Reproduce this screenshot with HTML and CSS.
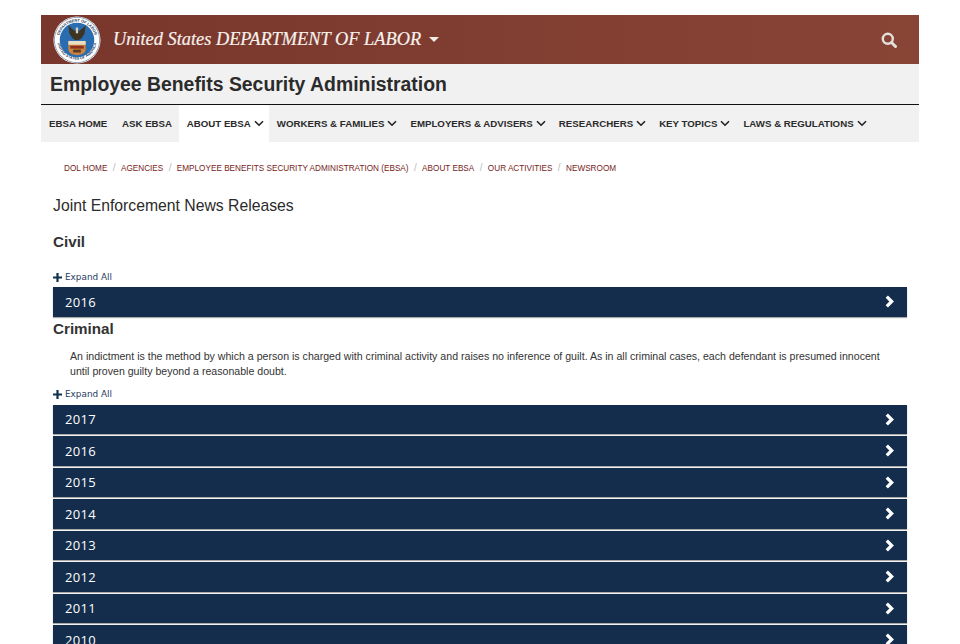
FILE: index.html
```html
<!DOCTYPE html>
<html lang="en">
<head>
    <meta charset="UTF-8">
    <meta name="viewport" content="width=device-width, initial-scale=1.0">
    <title>Joint Enforcement News Releases</title>
    <link rel="stylesheet" href="styles.css">
</head>
<body>
<div class="page">

    <header class="top-bar">
        <svg class="seal" viewBox="0 0 50 50" role="img" aria-label="Department of Labor seal">
            <circle cx="25" cy="25" r="24.5" fill="#fff"/>
            <circle cx="25" cy="25" r="23.6" fill="none" stroke="#2a3f63" stroke-width=".5"/>
            <defs>
                <path id="ring-top" d="M6 25a19 19 0 0 1 38 0"/>
                <path id="ring-bottom" d="M4.500 25a20.500 20.500 0 0 0 41 0"/>
            </defs>
            <text class="seal-text"><textPath href="#ring-top" startOffset="50%" text-anchor="middle">DEPARTMENT OF LABOR</textPath></text>
            <text class="seal-text"><textPath href="#ring-bottom" startOffset="50%" text-anchor="middle">UNITED STATES OF AMERICA</textPath></text>
            <circle cx="25" cy="25" r="18" fill="#2a6cb0"/>
            <path d="M25 13l-2 3-7-6 1 8 3 5 3 2h4l3-2 3-5 1-8-7 6z" fill="#3d3524"/>
            <path d="M23.800 12h2.400v6h-2.400z" fill="#d9d2bd"/>
            <path d="M16 26h18v9q0 5-9 6-9-1-9-6z" fill="#c9853f"/>
            <path d="M16 26h18v4H16z" fill="#eadfc4"/>
            <path d="M18 31h14v3H18z" fill="#8e2f22"/>
            <path d="M21 35h8v3h-8z" fill="#5c3a22"/>
        </svg>
        <a class="agency" href="#">United States DEPARTMENT OF LABOR<span class="caret"></span></a>
        <svg class="search" viewBox="0 0 16 16" aria-label="Search">
            <circle cx="6.800" cy="6.800" r="5" fill="none" stroke="currentColor" stroke-width="2.400"/>
            <path d="M10.500 10.500l4 4" stroke="currentColor" stroke-width="3" stroke-linecap="round"/>
        </svg>
    </header>

    <div class="title-band">Employee Benefits Security Administration</div>

    <nav class="main-nav">
        <a class="nav-link" href="#">EBSA HOME</a>
        <a class="nav-link" href="#">ASK EBSA</a>
        <a class="nav-link has-menu active" href="#">ABOUT EBSA<svg class="chev" viewBox="0 0 10 7"><path d="M1 1.200l4 4 4-4"/></svg></a>
        <a class="nav-link has-menu" href="#">WORKERS &amp; FAMILIES<svg class="chev" viewBox="0 0 10 7"><path d="M1 1.200l4 4 4-4"/></svg></a>
        <a class="nav-link has-menu" href="#">EMPLOYERS &amp; ADVISERS<svg class="chev" viewBox="0 0 10 7"><path d="M1 1.200l4 4 4-4"/></svg></a>
        <a class="nav-link has-menu" href="#">RESEARCHERS<svg class="chev" viewBox="0 0 10 7"><path d="M1 1.200l4 4 4-4"/></svg></a>
        <a class="nav-link has-menu" href="#">KEY TOPICS<svg class="chev" viewBox="0 0 10 7"><path d="M1 1.200l4 4 4-4"/></svg></a>
        <a class="nav-link has-menu" href="#">LAWS &amp; REGULATIONS<svg class="chev" viewBox="0 0 10 7"><path d="M1 1.200l4 4 4-4"/></svg></a>
    </nav>

    <ul class="breadcrumb">
        <li><a href="#">DOL HOME</a></li>
        <li><a href="#">AGENCIES</a></li>
        <li><a href="#">EMPLOYEE BENEFITS SECURITY ADMINISTRATION (EBSA)</a></li>
        <li><a href="#">ABOUT EBSA</a></li>
        <li><a href="#">OUR ACTIVITIES</a></li>
        <li><a href="#">NEWSROOM</a></li>
    </ul>

    <main class="content">
        <h1>Joint Enforcement News Releases</h1>

        <h2 class="civil">Civil</h2>
        <a class="expand" href="#"><svg class="plus" viewBox="0 0 9 9"><path d="M3.400 0h2.200v3.400H9v2.200H5.600V9H3.400V5.600H0V3.400h3.400z"/></svg>Expand All</a>
        <div class="year-list">
            <a class="year" href="#">2016<svg class="arrow" viewBox="0 0 10 12"><path d="M2.500 1.500L7 6l-4.500 4.500"/></svg></a>
        </div>

        <h2 class="criminal">Criminal</h2>
        <p class="note">An indictment is the method by which a person is charged with criminal activity and raises no inference of guilt. As in all criminal cases, each defendant is presumed innocent until proven guilty beyond a reasonable doubt.</p>
        <a class="expand" href="#"><svg class="plus" viewBox="0 0 9 9"><path d="M3.400 0h2.200v3.400H9v2.200H5.600V9H3.400V5.600H0V3.400h3.400z"/></svg>Expand All</a>
        <div class="year-list">
            <a class="year" href="#">2017<svg class="arrow" viewBox="0 0 10 12"><path d="M2.500 1.500L7 6l-4.500 4.500"/></svg></a>
            <a class="year" href="#">2016<svg class="arrow" viewBox="0 0 10 12"><path d="M2.500 1.500L7 6l-4.500 4.500"/></svg></a>
            <a class="year" href="#">2015<svg class="arrow" viewBox="0 0 10 12"><path d="M2.500 1.500L7 6l-4.500 4.500"/></svg></a>
            <a class="year" href="#">2014<svg class="arrow" viewBox="0 0 10 12"><path d="M2.500 1.500L7 6l-4.500 4.500"/></svg></a>
            <a class="year" href="#">2013<svg class="arrow" viewBox="0 0 10 12"><path d="M2.500 1.500L7 6l-4.500 4.500"/></svg></a>
            <a class="year" href="#">2012<svg class="arrow" viewBox="0 0 10 12"><path d="M2.500 1.500L7 6l-4.500 4.500"/></svg></a>
            <a class="year" href="#">2011<svg class="arrow" viewBox="0 0 10 12"><path d="M2.500 1.500L7 6l-4.500 4.500"/></svg></a>
            <a class="year" href="#">2010<svg class="arrow" viewBox="0 0 10 12"><path d="M2.500 1.500L7 6l-4.500 4.500"/></svg></a>
        </div>
    </main>

</div>
</body>
</html>
```

FILE: styles.css
```css
html, body {
    margin: 0;
    height: 100%;
    overflow: hidden;
    background: #fff;
}

body {
    font-family: "Liberation Sans", Arial, sans-serif;
    color: #222;
}

a {
    text-decoration: none;
}

.page {
    width: 878px;
    margin: 0 auto;
    padding-top: 15px;
}

.top-bar {
    display: flex;
    align-items: center;
    height: 49px;
    padding: 0 22px 0 12px;
    background: linear-gradient(to right, #78362c, #884536);
}

.seal {
    width: 48px;
    height: 48px;
    flex: none;
}

.seal-text {
    font-family: "Liberation Sans", sans-serif;
    font-size: 4px;
    font-weight: bold;
    fill: #2a3f63;
}

.agency {
    margin-left: 12px;
    font-family: "Liberation Serif", "Times New Roman", serif;
    font-style: italic;
    font-size: 18.350px;
    color: #f6f1ec;
    -webkit-text-stroke: .2px #f6f1ec;
}

.caret {
    display: inline-block;
    margin-left: 8px;
    vertical-align: 3px;
    border-top: 5px solid #f2ebe6;
    border-left: 5px solid transparent;
    border-right: 5px solid transparent;
}

.search {
    width: 16px;
    height: 16px;
    margin-left: auto;
    color: #e4e0da;
}

.title-band {
    height: 40px;
    padding-left: 9px;
    border-bottom: 1px solid #111;
    background: #f1f1f1;
    font-size: 19.400px;
    font-weight: bold;
    line-height: 41px;
    color: #2b2b2b;
}

.main-nav {
    display: flex;
    height: 37px;
    background: #f1f1f1;
}

.nav-link {
    display: flex;
    align-items: center;
    padding: 0 6.700px 0 8px;
    font-size: 9.700px;
    font-weight: bold;
    color: #2b2b2b;
    white-space: nowrap;
}

.nav-link.has-menu {
    padding-right: 5px;
}

.nav-link.active {
    background: #fff;
}

.chev {
    width: 10px;
    height: 7px;
    margin-left: 3px;
    fill: none;
    stroke: #222;
    stroke-width: 1.600;
}

.breadcrumb {
    display: flex;
    align-items: baseline;
    list-style: none;
    margin: 0;
    padding: 20px 0 0 23px;
    font-size: 8.200px;
    line-height: 11px;
}

.breadcrumb li + li::before {
    content: "/";
    padding: 0 5.400px;
    color: #bbb;
    font-size: 10px;
}

.breadcrumb a {
    color: #76241b;
}

.content {
    padding: 0 12px;
}

h1 {
    margin: 22px 0 0;
    font-size: 15.750px;
    font-weight: normal;
    line-height: 20px;
    color: #2b2b2b;
}

h2 {
    margin: 0;
    font-size: 15.200px;
    font-weight: bold;
    line-height: 18px;
    color: #333;
}

.civil {
    margin-top: 17px;
}

.criminal {
    margin-top: 3px;
}

.note {
    margin: 11px 14px 0 17px;
    font-size: 10.600px;
    line-height: 15px;
    color: #333;
}

.expand {
    display: flex;
    align-items: center;
    height: 12px;
    font-family: "DejaVu Sans", Verdana, sans-serif;
    font-size: 8.900px;
    color: #1f3a5f;
}

.civil + .expand {
    margin-top: 20px;
}

.note + .expand {
    margin-top: 9.500px;
}

.plus {
    width: 9px;
    height: 9px;
    margin-right: 3px;
    fill: #13304f;
}

.year-list {
    margin-top: 4px;
}

.note + .expand + .year-list {
    margin-top: 4.500px;
}

.year {
    display: flex;
    align-items: center;
    justify-content: space-between;
    box-sizing: border-box;
    height: 29.500px;
    margin-bottom: 2px;
    padding: 0 12px;
    background: #142d4c;
    box-shadow: 0 1px 1px #aaa;
    font-family: "Open Sans", "DejaVu Sans", sans-serif;
    font-size: 13px;
    letter-spacing: .3px;
    color: #fff;
}

.arrow {
    width: 11px;
    height: 13px;
    fill: none;
    stroke: #fff;
    stroke-width: 3;
}
```
